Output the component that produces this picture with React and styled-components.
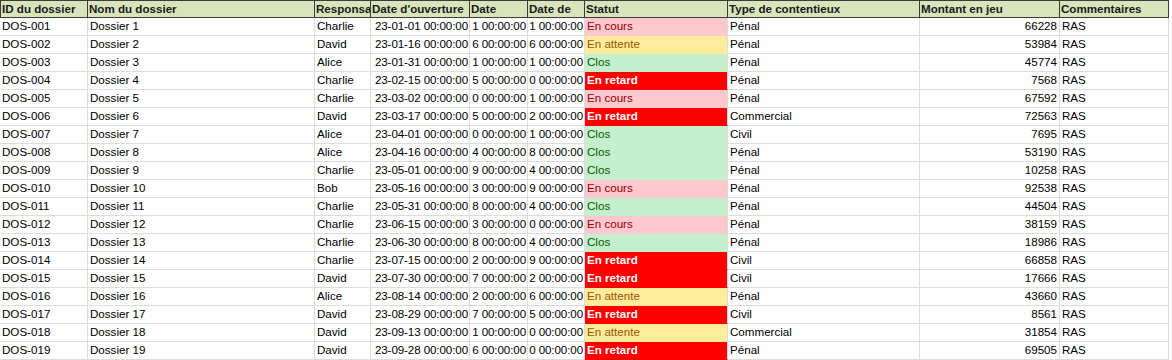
import React from 'react'
import styled, { createGlobalStyle } from 'styled-components'

const GlobalStyle = createGlobalStyle`
  html, body { margin: 0; padding: 0; background: #ffffff; }
  body { font-family: "Liberation Sans", Arial, sans-serif; }
`

const widths = [88, 227, 56, 99, 58, 57, 143, 192, 140, 109]

const Sheet = styled.div`
  display: grid;
  grid-template-columns: ${widths.map((w) => w + 'px').join(' ')};
  grid-auto-rows: 18px;
  width: max-content;
  font-size: 11.6px;
  color: #000;
`

const HeadCell = styled.div`
  box-sizing: border-box;
  background: #d8e4bc;
  border-top: 1px solid #3c3c3c;
  border-right: 1px solid #3c3c3c;
  border-bottom: 1px solid #3c3c3c;
  border-left: ${(p) => (p.$first ? '1px solid #3c3c3c' : 'none')};
  font-weight: 700;
  color: #1a1a1a;
  display: flex;
  align-items: flex-end;
  padding: 0 1px 2px 1px;
  white-space: nowrap;
  overflow: hidden;
`

const Cell = styled.div`
  box-sizing: border-box;
  border-right: 1px solid #dcdcdc;
  border-bottom: 1px solid #dcdcdc;
  display: flex;
  align-items: flex-end;
  justify-content: ${(p) => (p.$right ? 'flex-end' : 'flex-start')};
  padding: 0 2px 3px 2px;
  white-space: nowrap;
  overflow: hidden;
`

const DateCell = styled(Cell)`
  justify-content: flex-end;
  padding: 0 1px 3px 1px;
  letter-spacing: -0.1px;
`

const statusStyles = {
  'En cours': { bg: '#ffc7ce', fg: '#9c0006', bold: false },
  'En attente': { bg: '#ffeb9c', fg: '#9c5700', bold: false },
  Clos: { bg: '#c6efce', fg: '#006100', bold: false },
  'En retard': { bg: '#ff0000', fg: '#ffffff', bold: true },
}

const StatusCell = styled(Cell)`
  background: ${(p) => statusStyles[p.$status].bg};
  color: ${(p) => statusStyles[p.$status].fg};
  font-weight: ${(p) => (statusStyles[p.$status].bold ? 700 : 400)};
  border-bottom-color: ${(p) => statusStyles[p.$status].bg};
  border-right-color: #dcdcdc;
`

const headers = [
  'ID du dossier',
  'Nom du dossier',
  'Responsa',
  "Date d'ouverture",
  'Date',
  'Date de',
  'Statut',
  'Type de contentieux',
  'Montant en jeu',
  'Commentaires',
]

const rows = [
  ['Charlie', '01-01', '1', '1', 'En cours', 'Pénal', 66228],
  ['David', '01-16', '6', '6', 'En attente', 'Pénal', 53984],
  ['Alice', '01-31', '1', '1', 'Clos', 'Pénal', 45774],
  ['Charlie', '02-15', '5', '0', 'En retard', 'Pénal', 7568],
  ['Charlie', '03-02', '0', '1', 'En cours', 'Pénal', 67592],
  ['David', '03-17', '5', '2', 'En retard', 'Commercial', 72563],
  ['Alice', '04-01', '0', '1', 'Clos', 'Civil', 7695],
  ['Alice', '04-16', '4', '8', 'Clos', 'Pénal', 53190],
  ['Charlie', '05-01', '9', '4', 'Clos', 'Pénal', 10258],
  ['Bob', '05-16', '3', '9', 'En cours', 'Pénal', 92538],
  ['Charlie', '05-31', '8', '4', 'Clos', 'Pénal', 44504],
  ['Charlie', '06-15', '3', '0', 'En cours', 'Pénal', 38159],
  ['Charlie', '06-30', '8', '4', 'Clos', 'Pénal', 18986],
  ['Charlie', '07-15', '2', '9', 'En retard', 'Civil', 66858],
  ['David', '07-30', '7', '2', 'En retard', 'Civil', 17666],
  ['Alice', '08-14', '2', '6', 'En attente', 'Pénal', 43660],
  ['David', '08-29', '7', '5', 'En retard', 'Civil', 8561],
  ['David', '09-13', '1', '0', 'En attente', 'Commercial', 31854],
  ['David', '09-28', '6', '0', 'En retard', 'Pénal', 69505],
]

const App = () => {
  return (
    <>
      <GlobalStyle />
      <Sheet>
        {headers.map((h, i) => (
          <HeadCell key={h} $first={i === 0}>{h}</HeadCell>
        ))}
        {rows.map((r, i) => {
          const n = String(i + 1).padStart(3, '0')
          const [resp, open, d1, d2, status, type, amount] = r
          return (
            <React.Fragment key={n}>
              <Cell>DOS-{n}</Cell>
              <Cell>Dossier {i + 1}</Cell>
              <Cell>{resp}</Cell>
              <DateCell>23-{open} 00:00:00</DateCell>
              <DateCell>{d1} 00:00:00</DateCell>
              <DateCell>{d2} 00:00:00</DateCell>
              <StatusCell $status={status}>{status}</StatusCell>
              <Cell>{type}</Cell>
              <Cell $right>{amount}</Cell>
              <Cell>RAS</Cell>
            </React.Fragment>
          )
        })}
      </Sheet>
    </>
  )
}

export default App
